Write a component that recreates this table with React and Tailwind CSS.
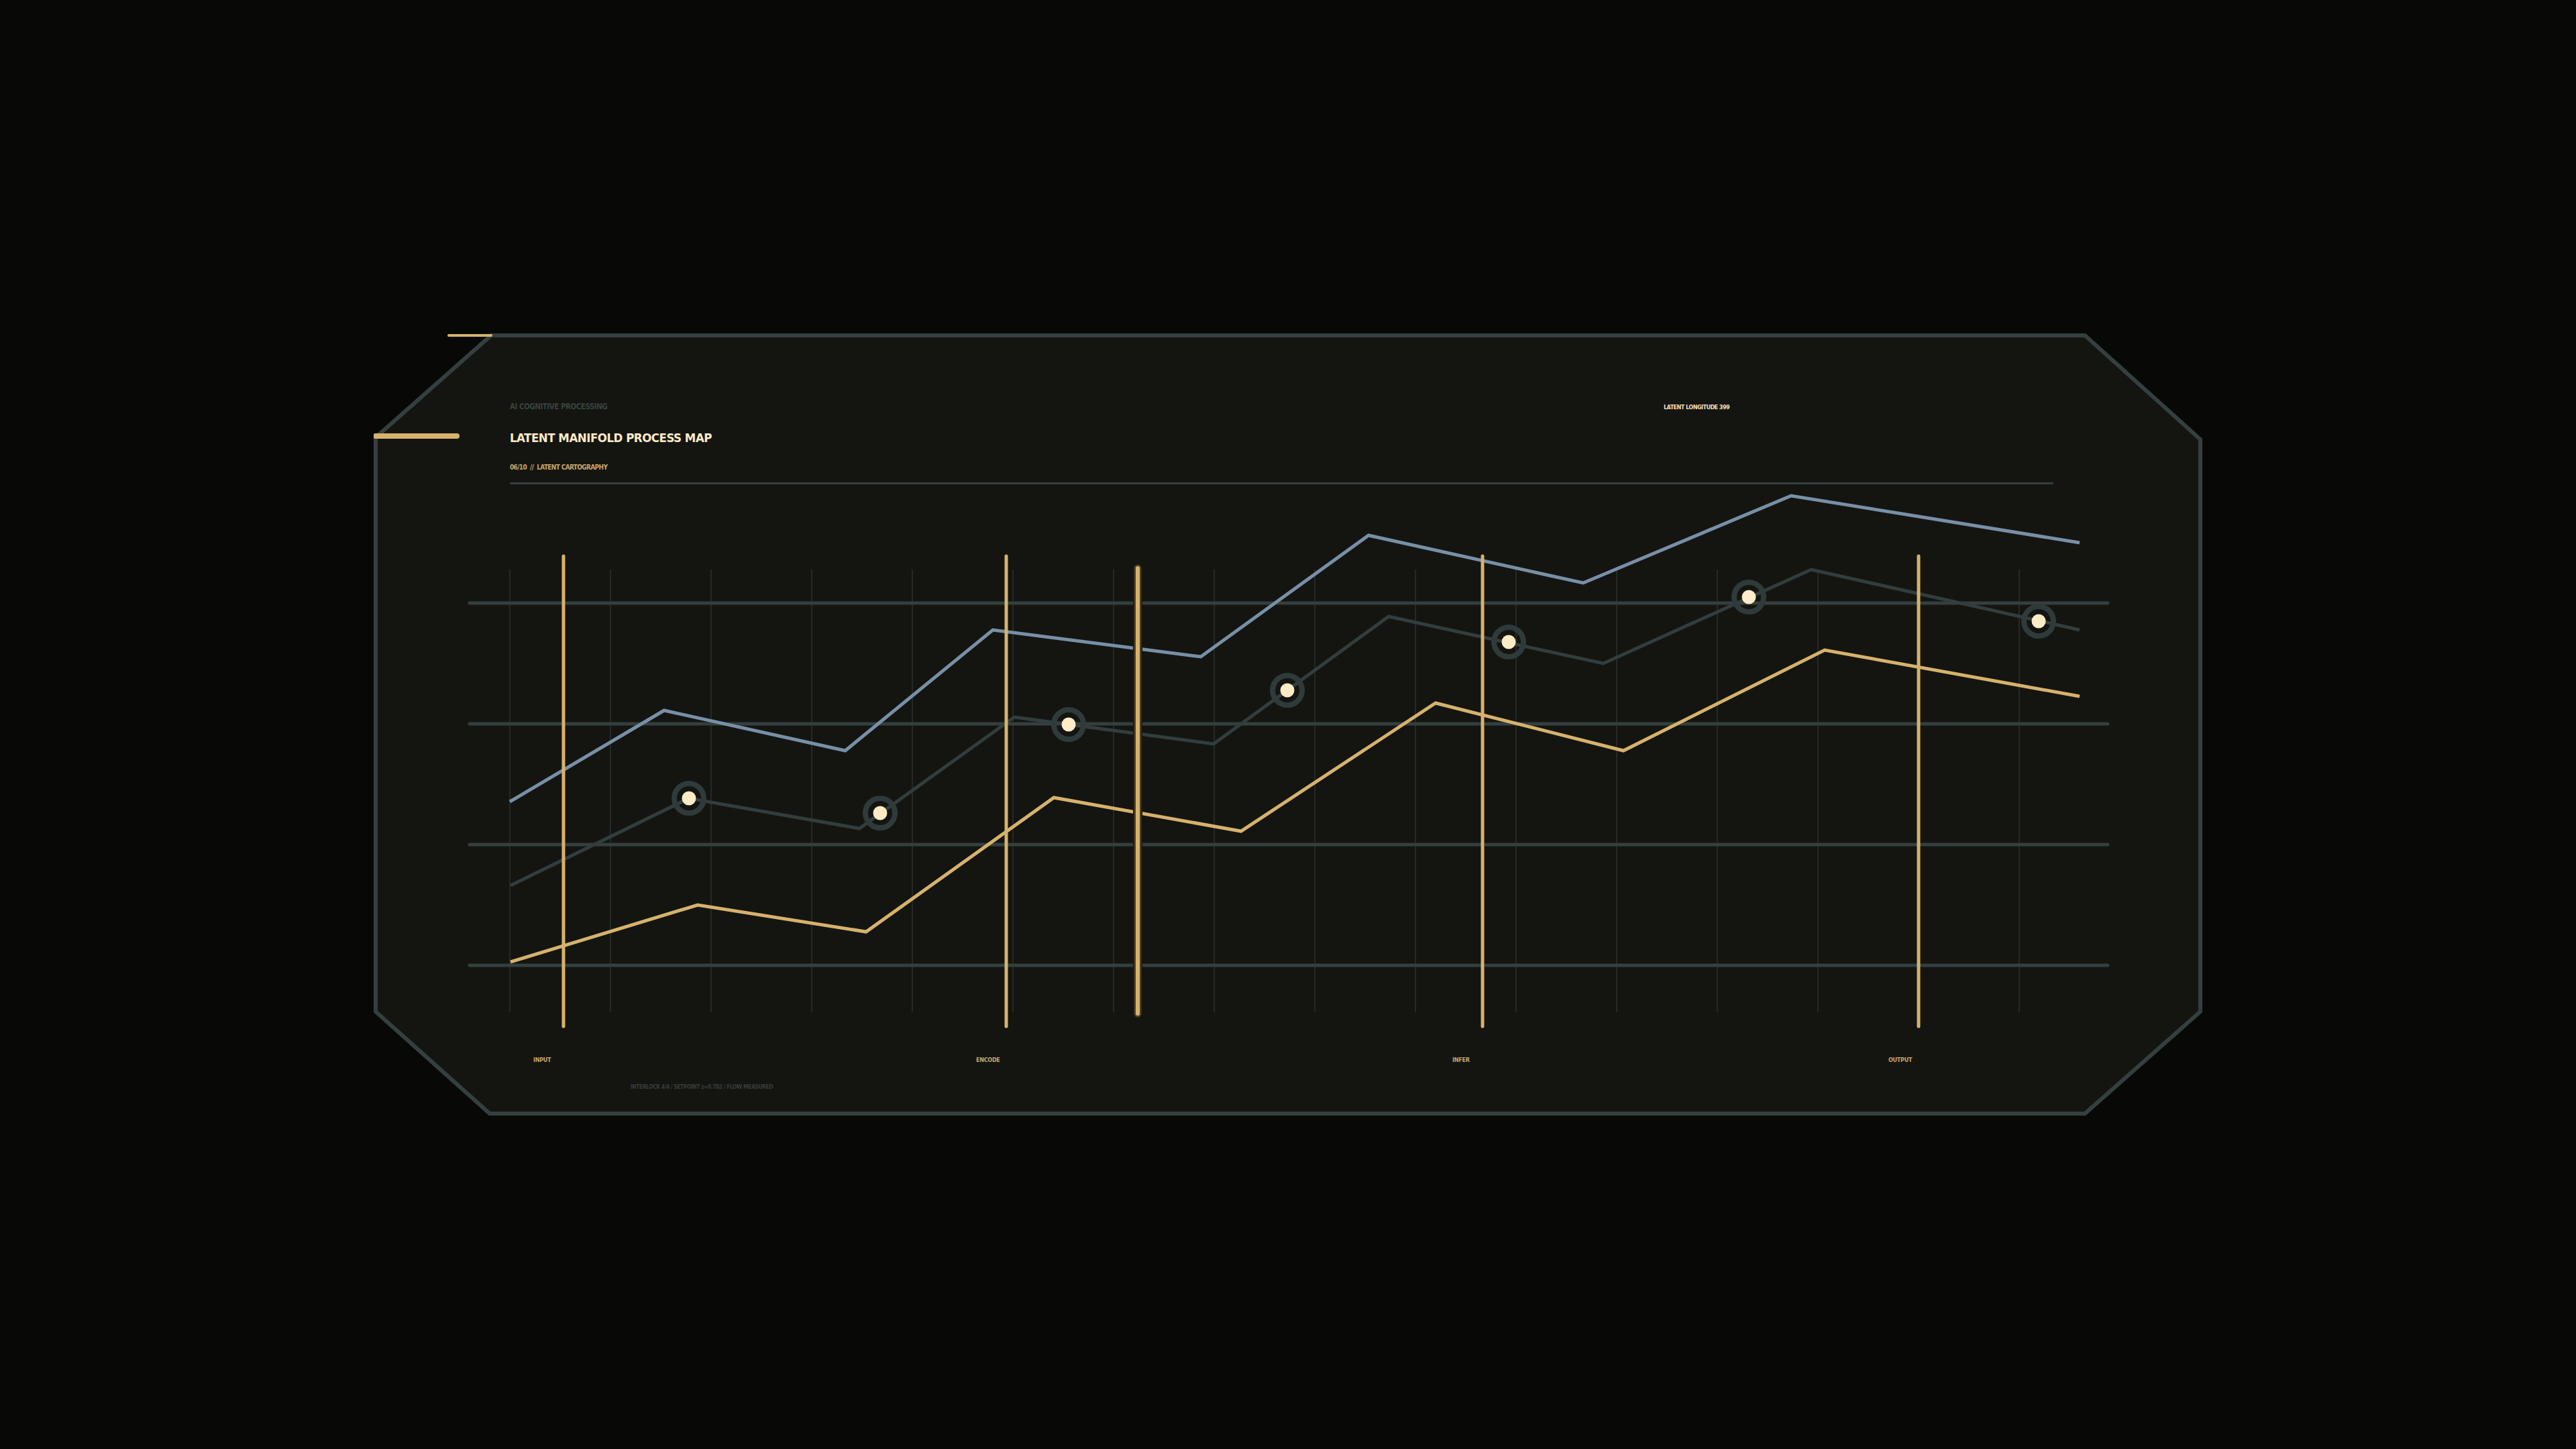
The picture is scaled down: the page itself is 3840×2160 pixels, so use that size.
const blue = "760,1196 990,1060 1260,1120 1480,940 1790,980 2040,799 2360,870 2670,740 3100,810";
const gray = "761,1321 1027,1191 1281,1236 1512,1070 1809,1110 2070,920 2390,990 2700,850 3100,940";
const gold = "761,1435 1040,1350 1291,1390 1571,1190 1850,1240 2140,1049 2420,1120 2720,970 3100,1039";

const dots = [
  [1027, 1191],
  [1312, 1213],
  [1593, 1081],
  [1919, 1030],
  [2249, 958],
  [2607, 891],
  [3039, 927],
];

const gridX = Array.from({ length: 16 }, (_, i) => 760 + i * 150);
const rows = [900, 1080, 1260, 1440];
const markers = [840, 1500, 2210, 2860];

const font = { fontFamily: '"DejaVu Sans Condensed", "DejaVu Sans", "Liberation Sans", sans-serif' };

const Frame = () => (
  <svg className="absolute inset-0" width="2726" height="1166" viewBox="0 0 2726 1166">
    <polygon
      points="175,3 2551,3 2723,158 2723,1011 2551,1163 173,1163 3,1011 3,155"
      fill="#141511"
      stroke="#343f3f"
      strokeWidth="6"
      strokeLinejoin="miter"
    />
    <line x1="112" y1="3" x2="175" y2="3" stroke="#d6b26c" strokeWidth="4" strokeLinecap="round" />
    <line x1="3" y1="153" x2="124" y2="153" stroke="#d6b26c" strokeWidth="8" strokeLinecap="round" />
  </svg>
);

const Chart = () => (
  <svg className="block -ml-[60px] overflow-visible" width="2450" height="730" viewBox="700 820 2450 730">
    {gridX.map((x) => (
      <line key={x} x1={x} y1="850" x2={x} y2="1510" stroke="#2a302f" strokeWidth="1.5" />
    ))}
    {rows.map((y) => (
      <line key={y} x1="700" y1={y} x2="3142" y2={y} stroke="#343f3f" strokeWidth="5" strokeLinecap="round" />
    ))}
    <polyline points={blue} fill="none" stroke="#7890a6" strokeWidth="5" strokeLinejoin="miter" />
    <polyline points={gray} fill="none" stroke="#333d3d" strokeWidth="5" strokeLinejoin="miter" />
    <polyline points={gold} fill="none" stroke="#d6b26c" strokeWidth="5" strokeLinejoin="miter" />
    {markers.map((x) => (
      <line key={x} x1={x} y1="830" x2={x} y2="1531" stroke="#d6b26c" strokeWidth="5" strokeLinecap="round" />
    ))}
    <line x1="1696" y1="848" x2="1696" y2="1512" stroke="#141511" strokeWidth="14" strokeLinecap="round" />
    <line x1="1696" y1="848" x2="1696" y2="1512" stroke="#4e3f25" strokeWidth="11" strokeLinecap="round" />
    <line x1="1696" y1="848" x2="1696" y2="1512" stroke="#d6b26c" strokeWidth="6" strokeLinecap="round" />
    {dots.map(([cx, cy]) => (
      <g key={cx}>
        <circle cx={cx} cy={cy} r="22" fill="none" stroke="#2f3a3a" strokeWidth="8" />
        <circle cx={cx} cy={cy} r="10.5" fill="#ffebc6" />
      </g>
    ))}
  </svg>
);

export default function App() {
  return (
    <div className="w-full h-screen bg-[#080906] flex items-center justify-center" style={font}>
      <div className="relative w-[2726px] h-[1166px]">
        <Frame />
        <div className="relative flex flex-col pl-[203px] pt-[103px]">
          <div className="flex w-[2301px]">
            <div className="w-[1720px] flex flex-col">
              <div className="text-[11.5px] leading-[12px] font-bold text-[#38423f] tracking-[-0.5px]">
                AI COGNITIVE PROCESSING
              </div>
              <h1 className="mt-[31px] text-[18.5px] leading-[19px] font-bold text-[#ffebc6] tracking-[-0.5px]">
                LATENT MANIFOLD PROCESS MAP
              </h1>
              <div className="mt-[30px] text-[10px] leading-none font-bold text-[#c9a56a] tracking-[-0.65px]">
                06/10 &nbsp;// &nbsp;LATENT CARTOGRAPHY
              </div>
            </div>
            <div className="mt-[2px] text-[9px] leading-[10px] font-bold text-[#f3dfb8] tracking-[-0.55px]">
              LATENT LONGITUDE 399
            </div>
          </div>
          <div className="mt-[17px] w-[2301px] h-[3px] rounded-full bg-[#343f3f]" />
          <div className="mt-[97px]">
            <Chart />
          </div>
          <div className="mt-[27px] flex pl-[35px] text-[9px] leading-none font-bold text-[#c9a56a] tracking-[-0.3px]">
            <span className="w-[660px]">INPUT</span>
            <span className="w-[710px]">ENCODE</span>
            <span className="w-[650px]">INFER</span>
            <span>OUTPUT</span>
          </div>
          <div className="mt-[31px] pl-[180px] text-[8.5px] leading-[9px] font-bold text-[#343d3b] tracking-[-0.5px]">
            INTERLOCK 4/4 / SETPOINT z=0.782 / FLOW MEASURED
          </div>
        </div>
      </div>
    </div>
  );
}
